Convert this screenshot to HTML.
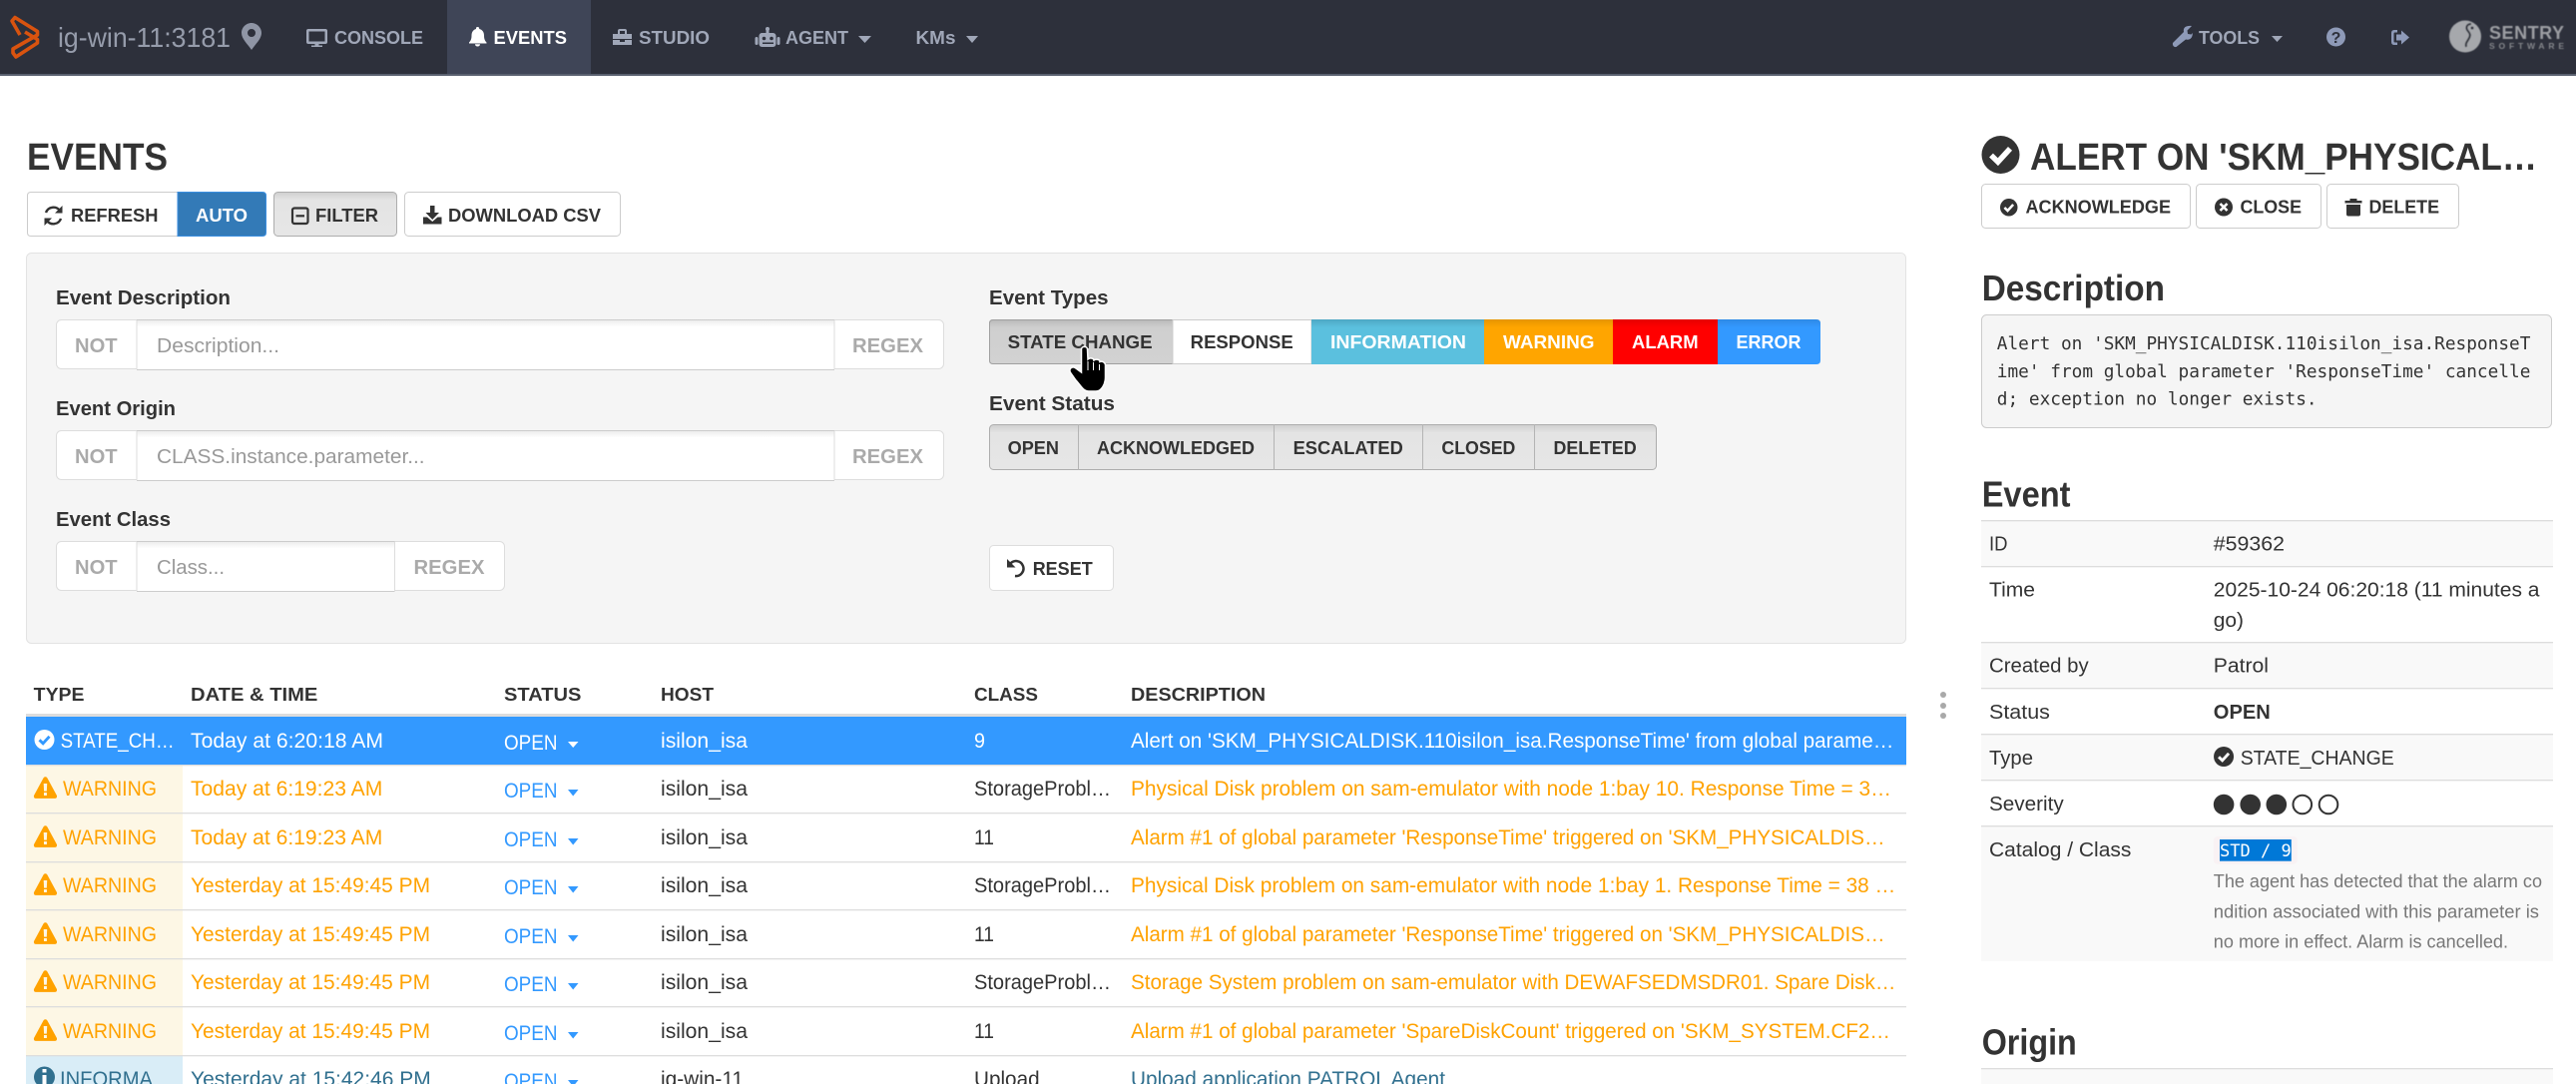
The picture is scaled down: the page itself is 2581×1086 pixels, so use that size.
<!DOCTYPE html>
<html lang="en">
<head>
<meta charset="utf-8">
<title>Events</title>
<style>
html,body{margin:0;padding:0;background:#fff;width:2581px;height:1086px;overflow:hidden}
svg{display:block;font-family:"Liberation Sans",Arial,sans-serif;fill:#333}
.b{font-weight:bold}
.n{font-size:18px;font-weight:bold;fill:#a0a7b8}
.h{font-size:18px;font-weight:bold;fill:#333}
.l{font-size:20px;font-weight:bold;fill:#333}
.g{font-size:20px;font-weight:bold;fill:#aaa}
.p{font-size:20px;fill:#999}
.r{font-size:21px;fill:#333}
.w{fill:#ffa200}
.wh{fill:#fff}
.s{fill:#39f}
.i{fill:#31708f}
.d{font-size:20px;fill:#333}
.m{font-family:"DejaVu Sans Mono","Liberation Mono",monospace;font-size:17.8px;fill:#333}
.hg{font-size:36px;font-weight:bold;fill:#333}
</style>
</head>
<body>
<svg xmlns="http://www.w3.org/2000/svg" width="2581" height="1086" viewBox="0 0 2581 1086">
<defs>
<linearGradient id="gA" x1="0" y1="0" x2="0" y2="1"><stop offset="0" stop-color="#cfcfcf"/><stop offset=".18" stop-color="#e4e4e4"/><stop offset="1" stop-color="#e6e6e6"/></linearGradient>
<linearGradient id="gS" x1="0" y1="0" x2="0" y2="1"><stop offset="0" stop-color="#b8b8b8"/><stop offset=".18" stop-color="#cfcfcf"/><stop offset="1" stop-color="#d2d2d2"/></linearGradient>
<linearGradient id="gI" x1="0" y1="0" x2="0" y2="1"><stop offset="0" stop-color="#4ea8c4"/><stop offset=".18" stop-color="#5bc0de"/></linearGradient>
<linearGradient id="gW" x1="0" y1="0" x2="0" y2="1"><stop offset="0" stop-color="#e69500"/><stop offset=".18" stop-color="#ffa500"/></linearGradient>
<linearGradient id="gR" x1="0" y1="0" x2="0" y2="1"><stop offset="0" stop-color="#e60000"/><stop offset=".18" stop-color="#f00"/></linearGradient>
<linearGradient id="gE" x1="0" y1="0" x2="0" y2="1"><stop offset="0" stop-color="#2e8ae6"/><stop offset=".18" stop-color="#39f"/></linearGradient>
<linearGradient id="gIn" x1="0" y1="0" x2="0" y2="1"><stop offset="0" stop-color="#ececec"/><stop offset=".14" stop-color="#fff"/></linearGradient>
<filter id="bl"><feGaussianBlur stdDeviation="0.5"/></filter>
<symbol id="warn" viewBox="0 0 24 22.5">
<path fill="#ffa200" fill-rule="evenodd" d="M12 .3C13 .3 13.7.9 14.1 1.7L23.6 19.2C24.4 20.7 23.4 22.4 21.8 22.4H2.2C.6 22.4-.4 20.7.4 19.2L9.9 1.7C10.3.9 11 .3 12 .3ZM10.2 7.2 10.6 15H13.4L13.8 7.2ZM10.5 16.4V19.4H13.5V16.4Z"/>
</symbol>
<symbol id="chk" viewBox="0 0 20 20"><circle cx="10" cy="10" r="10" style="fill:currentColor"/><path d="M5 10.3 8.6 13.8 15 6.8" fill="none" stroke-width="2.9" style="stroke:var(--c)"/></symbol>
</defs>

<!-- navbar -->
<rect width="2581" height="75" fill="#2d303b"/>
<rect y="74" width="2581" height="2" fill="#59606f"/>
<rect x="448" width="144" height="74" fill="#3f4557"/>
<path d="M20 35 L12 21 L15 17.500 L37.500 31.500 V35 L13 49 V53 L16 57 L37.500 43 V39.500 L25 32" fill="none" stroke="#d9530f" stroke-width="3.600" stroke-linejoin="round"/>
<text x="58" y="47" font-size="28" fill="#969cab" textLength="173" lengthAdjust="spacingAndGlyphs">ig-win-11:3181</text>
<path fill="#8f95a5" fill-rule="evenodd" d="M252 23C257.5 23 262 27.5 262 33C262 39 256 44 252 50C248 44 242 39 242 33C242 27.5 246.5 23 252 23ZM252 29A4 4 0 1 0 252 37A4 4 0 1 0 252 29Z"/>
<!-- console -->
<path fill="#a0a7b8" fill-rule="evenodd" d="M309 29H326Q328 29 328 31V42Q328 44 326 44H319.500V45.500H323V47H312V45.500H315.500V44H309Q307 44 307 42V31Q307 29 309 29ZM309.500 31.500V41.500H325.500V31.500Z"/>
<text class="n" x="335" y="44" textLength="89" lengthAdjust="spacingAndGlyphs">CONSOLE</text>
<!-- bell -->
<path fill="#fff" d="M478.500 28C479.700 28 480.300 28.800 480.200 30C483.500 30.800 485 33.300 485 36.500C485 40 485.800 41.800 487.500 43.500V44.500H470V43.500C471.700 41.800 472.500 40 472.500 36.500C472.500 33.300 474 30.800 477 30C476.800 28.800 477.300 28 478.500 28ZM476 45.300H481C481 46.800 480 47.500 478.500 47.500C477 47.500 476 46.800 476 45.300Z" transform="translate(0 -1)"/>
<text class="n" style="fill:#fff" x="494.500" y="44" textLength="73.500" lengthAdjust="spacingAndGlyphs">EVENTS</text>
<!-- studio -->
<path fill="#a0a7b8" d="M619 34V31Q619 29 621 29H626Q628 29 628 31V34H633V39H614V34ZM621 34H626V31H621ZM614 40H621V42H626V40H633V45H614Z"/>
<text class="n" x="640" y="44" textLength="71" lengthAdjust="spacingAndGlyphs">STUDIO</text>
<!-- agent -->
<g fill="#a0a7b8"><rect x="767.500" y="28" width="3" height="6"/><circle cx="769" cy="29" r="2"/><rect x="760.500" y="33" width="17" height="14" rx="3"/><rect x="756.500" y="37" width="3" height="8" rx="1.500"/><rect x="778.500" y="37" width="3" height="8" rx="1.500"/></g>
<circle cx="765.500" cy="38.500" r="1.800" fill="#2d303b"/><circle cx="773" cy="38.500" r="1.800" fill="#2d303b"/><rect x="764" y="42.500" width="11" height="1.500" fill="#2d303b"/>
<text class="n" x="787" y="44" textLength="63" lengthAdjust="spacingAndGlyphs">AGENT</text>
<path fill="#a0a7b8" d="M860 36H873L866.500 43Z"/>
<text class="n" x="917.500" y="44" textLength="40" lengthAdjust="spacingAndGlyphs">KMs</text>
<path fill="#a0a7b8" d="M968 36H980L974 43Z"/>
<!-- tools -->
<path fill="#8e9ab8" d="M2177 43L2188 32C2187 27 2191 25.500 2196 26L2191.500 30.500 2192 34 2195.500 34.500 2196.800 33C2197 38 2194 40.500 2190 39.500L2180.500 47C2178 47.500 2176.500 45.500 2177 43Z"/>
<text class="n" x="2203" y="44" textLength="61" lengthAdjust="spacingAndGlyphs">TOOLS</text>
<path fill="#a0a7b8" d="M2276 36H2287L2281.500 42Z"/>
<circle cx="2340.500" cy="37" r="9.500" fill="#8e9ab8"/>
<text x="2340.500" y="43" font-size="16" font-weight="bold" fill="#2d303b" text-anchor="middle">?</text>
<path fill="#8e9ab8" d="M2396 33Q2396 30 2399 30H2402V32.500H2399.500Q2398.500 32.500 2398.500 33.500V41.500Q2398.500 42.500 2399.500 42.500H2402V45H2399Q2396 45 2396 42ZM2406 30.500 2414 37.500 2406 44.500V40.500H2401V34.500H2406Z"/>
<g filter="url(#bl)">
<circle cx="2470" cy="36.500" r="16" fill="#a6a8ac"/>
<path d="M2476 24C2472 24 2470.500 27 2472 30C2474 33 2476 34 2474 38C2472 42 2470 43 2471 47" fill="none" stroke="#2d303b" stroke-width="2"/>
<circle cx="2477" cy="28" r="1.500" fill="#2d303b"/>
<text x="2494" y="39" font-size="18" font-weight="bold" fill="#9c9ea3" textLength="75" lengthAdjust="spacing">SENTRY</text>
<text x="2494" y="49" font-size="8.500" font-weight="bold" fill="#85878c" textLength="75" lengthAdjust="spacing">SOFTWARE</text>
</g>

<!-- page heading -->
<text class="b" x="27" y="170" font-size="38" textLength="141" lengthAdjust="spacingAndGlyphs">EVENTS</text>

<!-- toolbar -->
<path d="M178 192.500H31Q27.500 192.500 27.500 196V233Q27.500 236.500 31 236.500H178Z" fill="#fff" stroke="#ccc"/>
<path d="M178 192.500H263Q266.500 192.500 266.500 196V233Q266.500 236.500 263 236.500H178Z" fill="#337ab7" stroke="#3a8ee0"/>
<g fill="none" stroke="#333" stroke-width="2.400"><path d="M46 213A8 8 0 0 1 60 211"/><path d="M61 219A8 8 0 0 1 47 221"/></g>
<path d="M62.500 206V213.500H55ZM44.500 226V218.500H52Z" fill="#333"/>
<text class="h" x="71" y="222" textLength="87.500" lengthAdjust="spacingAndGlyphs">REFRESH</text>
<text class="h" style="fill:#fff" x="196" y="222" textLength="52" lengthAdjust="spacingAndGlyphs">AUTO</text>
<rect x="274.500" y="192.500" width="123" height="44" rx="4" fill="url(#gA)" stroke="#adadad"/>
<rect x="293" y="208.500" width="15.500" height="15.500" rx="2" fill="none" stroke="#333" stroke-width="2.200"/><rect x="296.500" y="215.200" width="8.500" height="2.200" fill="#333"/>
<text class="h" x="316" y="222" textLength="63" lengthAdjust="spacingAndGlyphs">FILTER</text>
<rect x="405.500" y="192.500" width="216" height="44" rx="4" fill="#fff" stroke="#ccc"/>
<path fill="#333" d="M431 206H435.500V213H440L433.250 220 426.500 213H431ZM424 217.500H428L433.250 222 438.500 217.500H442.500V224.500H424Z"/>
<text class="h" x="449" y="222" textLength="153" lengthAdjust="spacingAndGlyphs">DOWNLOAD CSV</text>

<!-- filter panel -->
<rect x="26.500" y="253.500" width="1883" height="391" rx="5" fill="#f5f5f5" stroke="#e3e3e3"/>

<text class="l" x="56" y="305" textLength="175" lengthAdjust="spacingAndGlyphs">Event Description</text>
<rect x="56.500" y="320.500" width="889" height="49" rx="5" fill="#fff" stroke="#ddd"/>
<rect x="137" y="320.500" width="699" height="50" fill="url(#gIn)"/><path d="M137 320.500H836M137 370.500H836" stroke="#ccc"/><path d="M137 321V370M836 321V370" stroke="#ddd"/>
<text class="g" x="75" y="353" textLength="42.600" lengthAdjust="spacingAndGlyphs">NOT</text>
<text class="p" x="157" y="353" textLength="123" lengthAdjust="spacingAndGlyphs">Description...</text>
<text class="g" x="854" y="353" textLength="71" lengthAdjust="spacingAndGlyphs">REGEX</text>

<text class="l" x="56" y="416" textLength="120" lengthAdjust="spacingAndGlyphs">Event Origin</text>
<rect x="56.500" y="431.500" width="889" height="49" rx="5" fill="#fff" stroke="#ddd"/>
<rect x="137" y="431.500" width="699" height="50" fill="url(#gIn)"/><path d="M137 431.500H836M137 481.500H836" stroke="#ccc"/><path d="M137 432V481M836 432V481" stroke="#ddd"/>
<text class="g" x="75" y="464" textLength="42.600" lengthAdjust="spacingAndGlyphs">NOT</text>
<text class="p" x="157" y="464" textLength="268.600" lengthAdjust="spacingAndGlyphs">CLASS.instance.parameter...</text>
<text class="g" x="854" y="464" textLength="71" lengthAdjust="spacingAndGlyphs">REGEX</text>

<text class="l" x="56" y="527" textLength="115" lengthAdjust="spacingAndGlyphs">Event Class</text>
<rect x="56.500" y="542.500" width="449" height="49" rx="5" fill="#fff" stroke="#ddd"/>
<rect x="137" y="542.500" width="258.500" height="50" fill="url(#gIn)"/><path d="M137 542.500H395.500M137 592.500H395.500" stroke="#ccc"/><path d="M137 543V592M395.500 543V592" stroke="#ddd"/>
<text class="g" x="75" y="575" textLength="42.600" lengthAdjust="spacingAndGlyphs">NOT</text>
<text class="p" x="157" y="575" textLength="68" lengthAdjust="spacingAndGlyphs">Class...</text>
<text class="g" x="414.500" y="575" textLength="71" lengthAdjust="spacingAndGlyphs">REGEX</text>

<text class="l" x="991" y="305" textLength="119.600" lengthAdjust="spacingAndGlyphs">Event Types</text>
<path d="M1175 320H995Q991 320 991 324V361Q991 365 995 365H1175Z" fill="url(#gS)"/>
<path d="M1175 320.500H995Q991.500 320.500 991.500 324V361Q991.500 364.500 995 364.500H1175" fill="none" stroke="#a0a0a0"/><path d="M1175 320V365" stroke="#adadad"/>
<rect x="1175" y="320.500" width="139" height="44" fill="#fff" stroke="#ccc"/>
<rect x="1314" y="320" width="173" height="45" fill="url(#gI)"/>
<rect x="1487" y="320" width="129" height="45" fill="url(#gW)"/>
<rect x="1616" y="320" width="105" height="45" fill="url(#gR)"/>
<path d="M1721 320H1820Q1824 320 1824 324V361Q1824 365 1820 365H1721Z" fill="url(#gE)"/>
<text class="h" x="1009.600" y="349" textLength="145" lengthAdjust="spacingAndGlyphs">STATE CHANGE</text>
<text class="h" x="1192.700" y="349" textLength="103" lengthAdjust="spacingAndGlyphs">RESPONSE</text>
<text class="h wh" style="fill:#fff" x="1333" y="349" textLength="136" lengthAdjust="spacingAndGlyphs">INFORMATION</text>
<text class="h" style="fill:#fff" x="1506" y="349" textLength="91.500" lengthAdjust="spacingAndGlyphs">WARNING</text>
<text class="h" style="fill:#fff" x="1635" y="349" textLength="66.600" lengthAdjust="spacingAndGlyphs">ALARM</text>
<text class="h" style="fill:#fff" x="1739.500" y="349" textLength="65" lengthAdjust="spacingAndGlyphs">ERROR</text>

<text class="l" x="991" y="411" textLength="126" lengthAdjust="spacingAndGlyphs">Event Status</text>
<rect x="991.500" y="425.500" width="668" height="45" rx="4" fill="url(#gA)" stroke="#adadad"/>
<path d="M1080.500 425V471M1276.500 425V471M1425.500 425V471M1537.500 425V471" stroke="#b4b4b4"/>
<text class="h" x="1009.600" y="455" textLength="51.400" lengthAdjust="spacingAndGlyphs">OPEN</text>
<text class="h" x="1099" y="455" textLength="158" lengthAdjust="spacingAndGlyphs">ACKNOWLEDGED</text>
<text class="h" x="1295.600" y="455" textLength="110.200" lengthAdjust="spacingAndGlyphs">ESCALATED</text>
<text class="h" x="1444.400" y="455" textLength="74" lengthAdjust="spacingAndGlyphs">CLOSED</text>
<text class="h" x="1556.500" y="455" textLength="83.200" lengthAdjust="spacingAndGlyphs">DELETED</text>

<rect x="991.500" y="546.500" width="124" height="45" rx="4" fill="#fff" stroke="#ddd"/>
<path d="M1012 565A7.500 7.500 0 1 1 1017 577" fill="none" stroke="#333" stroke-width="2.500"/>
<path fill="#333" d="M1009 560V568.500H1017.500Z"/>
<text class="h" x="1034.700" y="576" textLength="60" lengthAdjust="spacingAndGlyphs">RESET</text>

<!-- events table header -->
<text class="h" x="33.700" y="702" textLength="50.800" lengthAdjust="spacingAndGlyphs">TYPE</text>
<text class="h" x="191" y="702" textLength="127.400" lengthAdjust="spacingAndGlyphs">DATE &amp; TIME</text>
<text class="h" x="505" y="702" textLength="77.400" lengthAdjust="spacingAndGlyphs">STATUS</text>
<text class="h" x="662" y="702" textLength="53" lengthAdjust="spacingAndGlyphs">HOST</text>
<text class="h" x="976" y="702" textLength="64" lengthAdjust="spacingAndGlyphs">CLASS</text>
<text class="h" x="1133" y="702" textLength="135" lengthAdjust="spacingAndGlyphs">DESCRIPTION</text>
<rect x="26" y="715" width="1884" height="3" fill="#ddd"/>

<!-- row backgrounds -->
<rect x="26" y="718" width="1884" height="48" fill="#39f"/>
<rect x="26" y="767" width="157" height="290" fill="#fdf7e5"/>
<rect x="26" y="1058" width="157" height="28" fill="#d9edf7"/>
<g fill="#ddd">
<rect x="26" y="766" width="1884" height="1.300"/>
<rect x="26" y="814" width="1884" height="1.300"/>
<rect x="26" y="863" width="1884" height="1.300"/>
<rect x="26" y="911" width="1884" height="1.300"/>
<rect x="26" y="960" width="1884" height="1.300"/>
<rect x="26" y="1008" width="1884" height="1.300"/>
<rect x="26" y="1057" width="1884" height="1.300"/>
</g>

<!-- row 1 -->
<use href="#chk" x="34" y="731" width="21" height="20" style="color:#fff;--c:#39f"/>
<text class="r wh" x="60.600" y="749" textLength="114" lengthAdjust="spacingAndGlyphs">STATE_CH…</text>
<text class="r wh" x="191" y="749" textLength="193" lengthAdjust="spacingAndGlyphs">Today at 6:20:18 AM</text>
<text class="r wh" x="505" y="751" textLength="53.500" lengthAdjust="spacingAndGlyphs">OPEN</text>
<path fill="#fff" d="M569 743H579.500L574.200 749Z"/>
<text class="r wh" x="662" y="749" textLength="87" lengthAdjust="spacingAndGlyphs">isilon_isa</text>
<text class="r wh" x="976" y="749" textLength="11" lengthAdjust="spacingAndGlyphs">9</text>
<text class="r wh" x="1133" y="749" textLength="764.500" lengthAdjust="spacingAndGlyphs">Alert on 'SKM_PHYSICALDISK.110isilon_isa.ResponseTime' from global parame…</text>

<!-- row 2 -->
<use href="#warn" x="33.700" y="778" width="23.500" height="22"/>
<text class="r w" x="63" y="797" textLength="94" lengthAdjust="spacingAndGlyphs">WARNING</text>
<text class="r w" x="191" y="797" textLength="192.300" lengthAdjust="spacingAndGlyphs">Today at 6:19:23 AM</text>
<text class="r s" x="505" y="799" textLength="53.500" lengthAdjust="spacingAndGlyphs">OPEN</text>
<path fill="#39f" d="M569 791H579.500L574.200 797.500Z"/>
<text class="r" x="662" y="797" textLength="87" lengthAdjust="spacingAndGlyphs">isilon_isa</text>
<text class="r" x="976" y="797" textLength="137" lengthAdjust="spacingAndGlyphs">StorageProbl…</text>
<text class="r w" x="1133" y="797" textLength="762" lengthAdjust="spacingAndGlyphs">Physical Disk problem on sam-emulator with node 1:bay 10. Response Time = 3…</text>

<!-- row 3 -->
<use href="#warn" x="33.700" y="827" width="23.500" height="22"/>
<text class="r w" x="63" y="846" textLength="94" lengthAdjust="spacingAndGlyphs">WARNING</text>
<text class="r w" x="191" y="846" textLength="192.300" lengthAdjust="spacingAndGlyphs">Today at 6:19:23 AM</text>
<text class="r s" x="505" y="848" textLength="53.500" lengthAdjust="spacingAndGlyphs">OPEN</text>
<path fill="#39f" d="M569 840H579.500L574.200 846.500Z"/>
<text class="r" x="662" y="846" textLength="87" lengthAdjust="spacingAndGlyphs">isilon_isa</text>
<text class="r" x="976" y="846" textLength="20" lengthAdjust="spacingAndGlyphs">11</text>
<text class="r w" x="1133" y="846" textLength="755.600" lengthAdjust="spacingAndGlyphs">Alarm #1 of global parameter 'ResponseTime' triggered on 'SKM_PHYSICALDIS…</text>

<!-- row 4 -->
<use href="#warn" x="33.700" y="875" width="23.500" height="22"/>
<text class="r w" x="63" y="894" textLength="94" lengthAdjust="spacingAndGlyphs">WARNING</text>
<text class="r w" x="191" y="894" textLength="240" lengthAdjust="spacingAndGlyphs">Yesterday at 15:49:45 PM</text>
<text class="r s" x="505" y="896" textLength="53.500" lengthAdjust="spacingAndGlyphs">OPEN</text>
<path fill="#39f" d="M569 888H579.500L574.200 894.500Z"/>
<text class="r" x="662" y="894" textLength="87" lengthAdjust="spacingAndGlyphs">isilon_isa</text>
<text class="r" x="976" y="894" textLength="137" lengthAdjust="spacingAndGlyphs">StorageProbl…</text>
<text class="r w" x="1133" y="894" textLength="766.400" lengthAdjust="spacingAndGlyphs">Physical Disk problem on sam-emulator with node 1:bay 1. Response Time = 38 …</text>

<!-- row 5 -->
<use href="#warn" x="33.700" y="924" width="23.500" height="22"/>
<text class="r w" x="63" y="943" textLength="94" lengthAdjust="spacingAndGlyphs">WARNING</text>
<text class="r w" x="191" y="943" textLength="240" lengthAdjust="spacingAndGlyphs">Yesterday at 15:49:45 PM</text>
<text class="r s" x="505" y="945" textLength="53.500" lengthAdjust="spacingAndGlyphs">OPEN</text>
<path fill="#39f" d="M569 937H579.500L574.200 943.500Z"/>
<text class="r" x="662" y="943" textLength="87" lengthAdjust="spacingAndGlyphs">isilon_isa</text>
<text class="r" x="976" y="943" textLength="20" lengthAdjust="spacingAndGlyphs">11</text>
<text class="r w" x="1133" y="943" textLength="755.600" lengthAdjust="spacingAndGlyphs">Alarm #1 of global parameter 'ResponseTime' triggered on 'SKM_PHYSICALDIS…</text>

<!-- row 6 -->
<use href="#warn" x="33.700" y="972" width="23.500" height="22"/>
<text class="r w" x="63" y="991" textLength="94" lengthAdjust="spacingAndGlyphs">WARNING</text>
<text class="r w" x="191" y="991" textLength="240" lengthAdjust="spacingAndGlyphs">Yesterday at 15:49:45 PM</text>
<text class="r s" x="505" y="993" textLength="53.500" lengthAdjust="spacingAndGlyphs">OPEN</text>
<path fill="#39f" d="M569 985H579.500L574.200 991.500Z"/>
<text class="r" x="662" y="991" textLength="87" lengthAdjust="spacingAndGlyphs">isilon_isa</text>
<text class="r" x="976" y="991" textLength="137" lengthAdjust="spacingAndGlyphs">StorageProbl…</text>
<text class="r w" x="1133" y="991" textLength="766.400" lengthAdjust="spacingAndGlyphs">Storage System problem on sam-emulator with DEWAFSEDMSDR01. Spare Disk…</text>

<!-- row 7 -->
<use href="#warn" x="33.700" y="1021" width="23.500" height="22"/>
<text class="r w" x="63" y="1040" textLength="94" lengthAdjust="spacingAndGlyphs">WARNING</text>
<text class="r w" x="191" y="1040" textLength="240" lengthAdjust="spacingAndGlyphs">Yesterday at 15:49:45 PM</text>
<text class="r s" x="505" y="1042" textLength="53.500" lengthAdjust="spacingAndGlyphs">OPEN</text>
<path fill="#39f" d="M569 1034H579.500L574.200 1040.500Z"/>
<text class="r" x="662" y="1040" textLength="87" lengthAdjust="spacingAndGlyphs">isilon_isa</text>
<text class="r" x="976" y="1040" textLength="20" lengthAdjust="spacingAndGlyphs">11</text>
<text class="r w" x="1133" y="1040" textLength="761" lengthAdjust="spacingAndGlyphs">Alarm #1 of global parameter 'SpareDiskCount' triggered on 'SKM_SYSTEM.CF2…</text>

<!-- row 8 -->
<circle cx="44.500" cy="1079" r="10.500" fill="#31708f"/>
<rect x="42.500" y="1077" width="4" height="9" fill="#fff"/><rect x="42.500" y="1071" width="4" height="3.500" fill="#fff"/>
<text class="r i" x="60" y="1088" textLength="93" lengthAdjust="spacingAndGlyphs">INFORMA</text>
<text class="r i" x="191" y="1088" textLength="240.700" lengthAdjust="spacingAndGlyphs">Yesterday at 15:42:46 PM</text>
<text class="r s" x="505" y="1090" textLength="53.500" lengthAdjust="spacingAndGlyphs">OPEN</text>
<path fill="#39f" d="M569 1082H579.500L574.200 1088.500Z"/>
<text class="r" x="662" y="1088" textLength="83" lengthAdjust="spacingAndGlyphs">ig-win-11</text>
<text class="r" x="976" y="1088" textLength="65.600" lengthAdjust="spacingAndGlyphs">Upload</text>
<text class="r i" x="1133" y="1088" textLength="315" lengthAdjust="spacingAndGlyphs">Upload application PATROL Agent</text>

<!-- splitter -->
<g fill="#a9a9a9"><circle cx="1947" cy="696" r="3"/><circle cx="1947" cy="707" r="3"/><circle cx="1947" cy="717" r="3"/></g>

<!-- detail panel -->
<use href="#chk" x="1985.500" y="136" width="38" height="38" style="color:#333;--c:#fff"/>
<text class="b" x="2034" y="170" font-size="38" textLength="508" lengthAdjust="spacingAndGlyphs">ALERT ON 'SKM_PHYSICAL…</text>

<rect x="1985.500" y="184.500" width="209" height="44" rx="4" fill="#fff" stroke="#ccc"/>
<use href="#chk" x="2004" y="199" width="17.500" height="17.500" style="color:#333;--c:#fff"/>
<text class="h" x="2029.500" y="213.700" textLength="145.500" lengthAdjust="spacingAndGlyphs">ACKNOWLEDGE</text>
<rect x="2200.500" y="184.500" width="125" height="44" rx="4" fill="#fff" stroke="#ccc"/>
<circle cx="2228" cy="207.500" r="9" fill="#333"/><path d="M2224.500 204 2231.500 211M2231.500 204 2224.500 211" stroke="#fff" stroke-width="2.600"/>
<text class="h" x="2244.500" y="213.700" textLength="61.500" lengthAdjust="spacingAndGlyphs">CLOSE</text>
<rect x="2331.500" y="184.500" width="132" height="44" rx="4" fill="#fff" stroke="#ccc"/>
<path fill="#333" d="M2349.500 201H2354.500V199H2361.500V201H2366.500V203.500H2349.500ZM2351 205H2365V214.500Q2365 216.500 2363 216.500H2353Q2351 216.500 2351 214.500Z"/>
<text class="h" x="2373.500" y="213.700" textLength="70.500" lengthAdjust="spacingAndGlyphs">DELETE</text>

<text class="hg" x="1985.700" y="301" textLength="183.300" lengthAdjust="spacingAndGlyphs">Description</text>
<rect x="1985.500" y="315.500" width="571" height="113" rx="5" fill="#f5f5f5" stroke="#ccc"/>
<text class="m" x="2000.800" y="350" textLength="534.600" lengthAdjust="spacingAndGlyphs">Alert on 'SKM_PHYSICALDISK.110isilon_isa.ResponseT</text>
<text class="m" x="2000.800" y="378" textLength="534.600" lengthAdjust="spacingAndGlyphs">ime' from global parameter 'ResponseTime' cancelle</text>
<text class="m" x="2000.800" y="405.700" textLength="320.800" lengthAdjust="spacingAndGlyphs">d; exception no longer exists.</text>

<text class="hg" x="1985.700" y="507.700" textLength="88.800" lengthAdjust="spacingAndGlyphs">Event</text>

<rect x="1985" y="521" width="573" height="46" fill="#f9f9f9"/>
<rect x="1985" y="643" width="573" height="46" fill="#f9f9f9"/>
<rect x="1985" y="735" width="573" height="46" fill="#f9f9f9"/>
<rect x="1985" y="827" width="573" height="136" fill="#f9f9f9"/>
<g fill="#ddd">
<rect x="1985" y="521" width="573" height="1.300"/>
<rect x="1985" y="567" width="573" height="1.300"/>
<rect x="1985" y="643" width="573" height="1.300"/>
<rect x="1985" y="689" width="573" height="1.300"/>
<rect x="1985" y="735" width="573" height="1.300"/>
<rect x="1985" y="781" width="573" height="1.300"/>
<rect x="1985" y="827" width="573" height="1.300"/>
</g>

<text class="d" x="1993" y="551.700" textLength="18.500" lengthAdjust="spacingAndGlyphs">ID</text>
<text class="d" x="2217.800" y="551.700" textLength="71.200" lengthAdjust="spacingAndGlyphs">#59362</text>
<text class="d" x="1993" y="597.700" textLength="46" lengthAdjust="spacingAndGlyphs">Time</text>
<text class="d" x="2217.800" y="597.700" textLength="326.700" lengthAdjust="spacingAndGlyphs">2025-10-24 06:20:18 (11 minutes a</text>
<text class="d" x="2217.800" y="628" textLength="30.200" lengthAdjust="spacingAndGlyphs">go)</text>
<text class="d" x="1993" y="673.500" textLength="99.700" lengthAdjust="spacingAndGlyphs">Created by</text>
<text class="d" x="2217.800" y="673.500" textLength="55.200" lengthAdjust="spacingAndGlyphs">Patrol</text>
<text class="d" x="1993" y="720" textLength="60.900" lengthAdjust="spacingAndGlyphs">Status</text>
<text class="d b" x="2217.800" y="720" textLength="57" lengthAdjust="spacingAndGlyphs">OPEN</text>
<text class="d" x="1993" y="766" textLength="44" lengthAdjust="spacingAndGlyphs">Type</text>
<use href="#chk" x="2217.800" y="748" width="20.500" height="20" style="color:#333;--c:#fff"/>
<text class="d" x="2244.700" y="766" textLength="154.100" lengthAdjust="spacingAndGlyphs">STATE_CHANGE</text>
<text class="d" x="1993" y="812" textLength="74.700" lengthAdjust="spacingAndGlyphs">Severity</text>
<circle cx="2228.100" cy="806" r="10.300" fill="#333"/>
<circle cx="2254.700" cy="806" r="10.300" fill="#333"/>
<circle cx="2280.800" cy="806" r="10.300" fill="#333"/>
<circle cx="2306.800" cy="806" r="9.300" fill="none" stroke="#333" stroke-width="2"/>
<circle cx="2333" cy="806" r="9.300" fill="none" stroke="#333" stroke-width="2"/>
<text class="d" x="1993" y="858" textLength="142.400" lengthAdjust="spacingAndGlyphs">Catalog / Class</text>
<rect x="2217.800" y="838" width="84" height="27.700" rx="4" fill="#f9f2f4"/>
<rect x="2224" y="841" width="71.800" height="21.700" fill="#0078d7"/>
<text x="2224" y="858" font-family="'DejaVu Sans Mono','Liberation Mono',monospace" font-size="17" fill="#fff" textLength="71.800" lengthAdjust="spacingAndGlyphs">STD / 9</text>
<text x="2217.800" y="889" font-size="18" fill="#777" textLength="329.200" lengthAdjust="spacingAndGlyphs">The agent has detected that the alarm co</text>
<text x="2217.800" y="919.300" font-size="18" fill="#777" textLength="326.200" lengthAdjust="spacingAndGlyphs">ndition associated with this parameter is</text>
<text x="2217.800" y="949.300" font-size="18" fill="#777" textLength="295.200" lengthAdjust="spacingAndGlyphs">no more in effect. Alarm is cancelled.</text>

<text class="hg" x="1985.700" y="1056.700" textLength="95.100" lengthAdjust="spacingAndGlyphs">Origin</text>
<rect x="1985" y="1070" width="573" height="16" fill="#f9f9f9"/>
<rect x="1985" y="1070" width="573" height="1.300" fill="#ddd"/>

<!-- mouse cursor -->
<path d="M1083.500 350C1083.500 346.500 1089.500 346.500 1089.500 350L1090 360C1092 358 1096 359 1096 361C1098 359.500 1102 360 1102 362.500C1104 361.500 1107.500 363 1107.500 366L1107.500 378C1107.500 385 1103.500 392 1098 392L1091 392C1085 392 1082 385 1078 381L1073 374C1070 370 1074 366 1078 369L1083.500 373Z" fill="#000" stroke="#fff" stroke-width="1.500"/>
<path d="M1095.500 363V371M1101.500 365V371M1090 362V371" stroke="#fff" stroke-width="1"/>
</svg>
</body>
</html>
